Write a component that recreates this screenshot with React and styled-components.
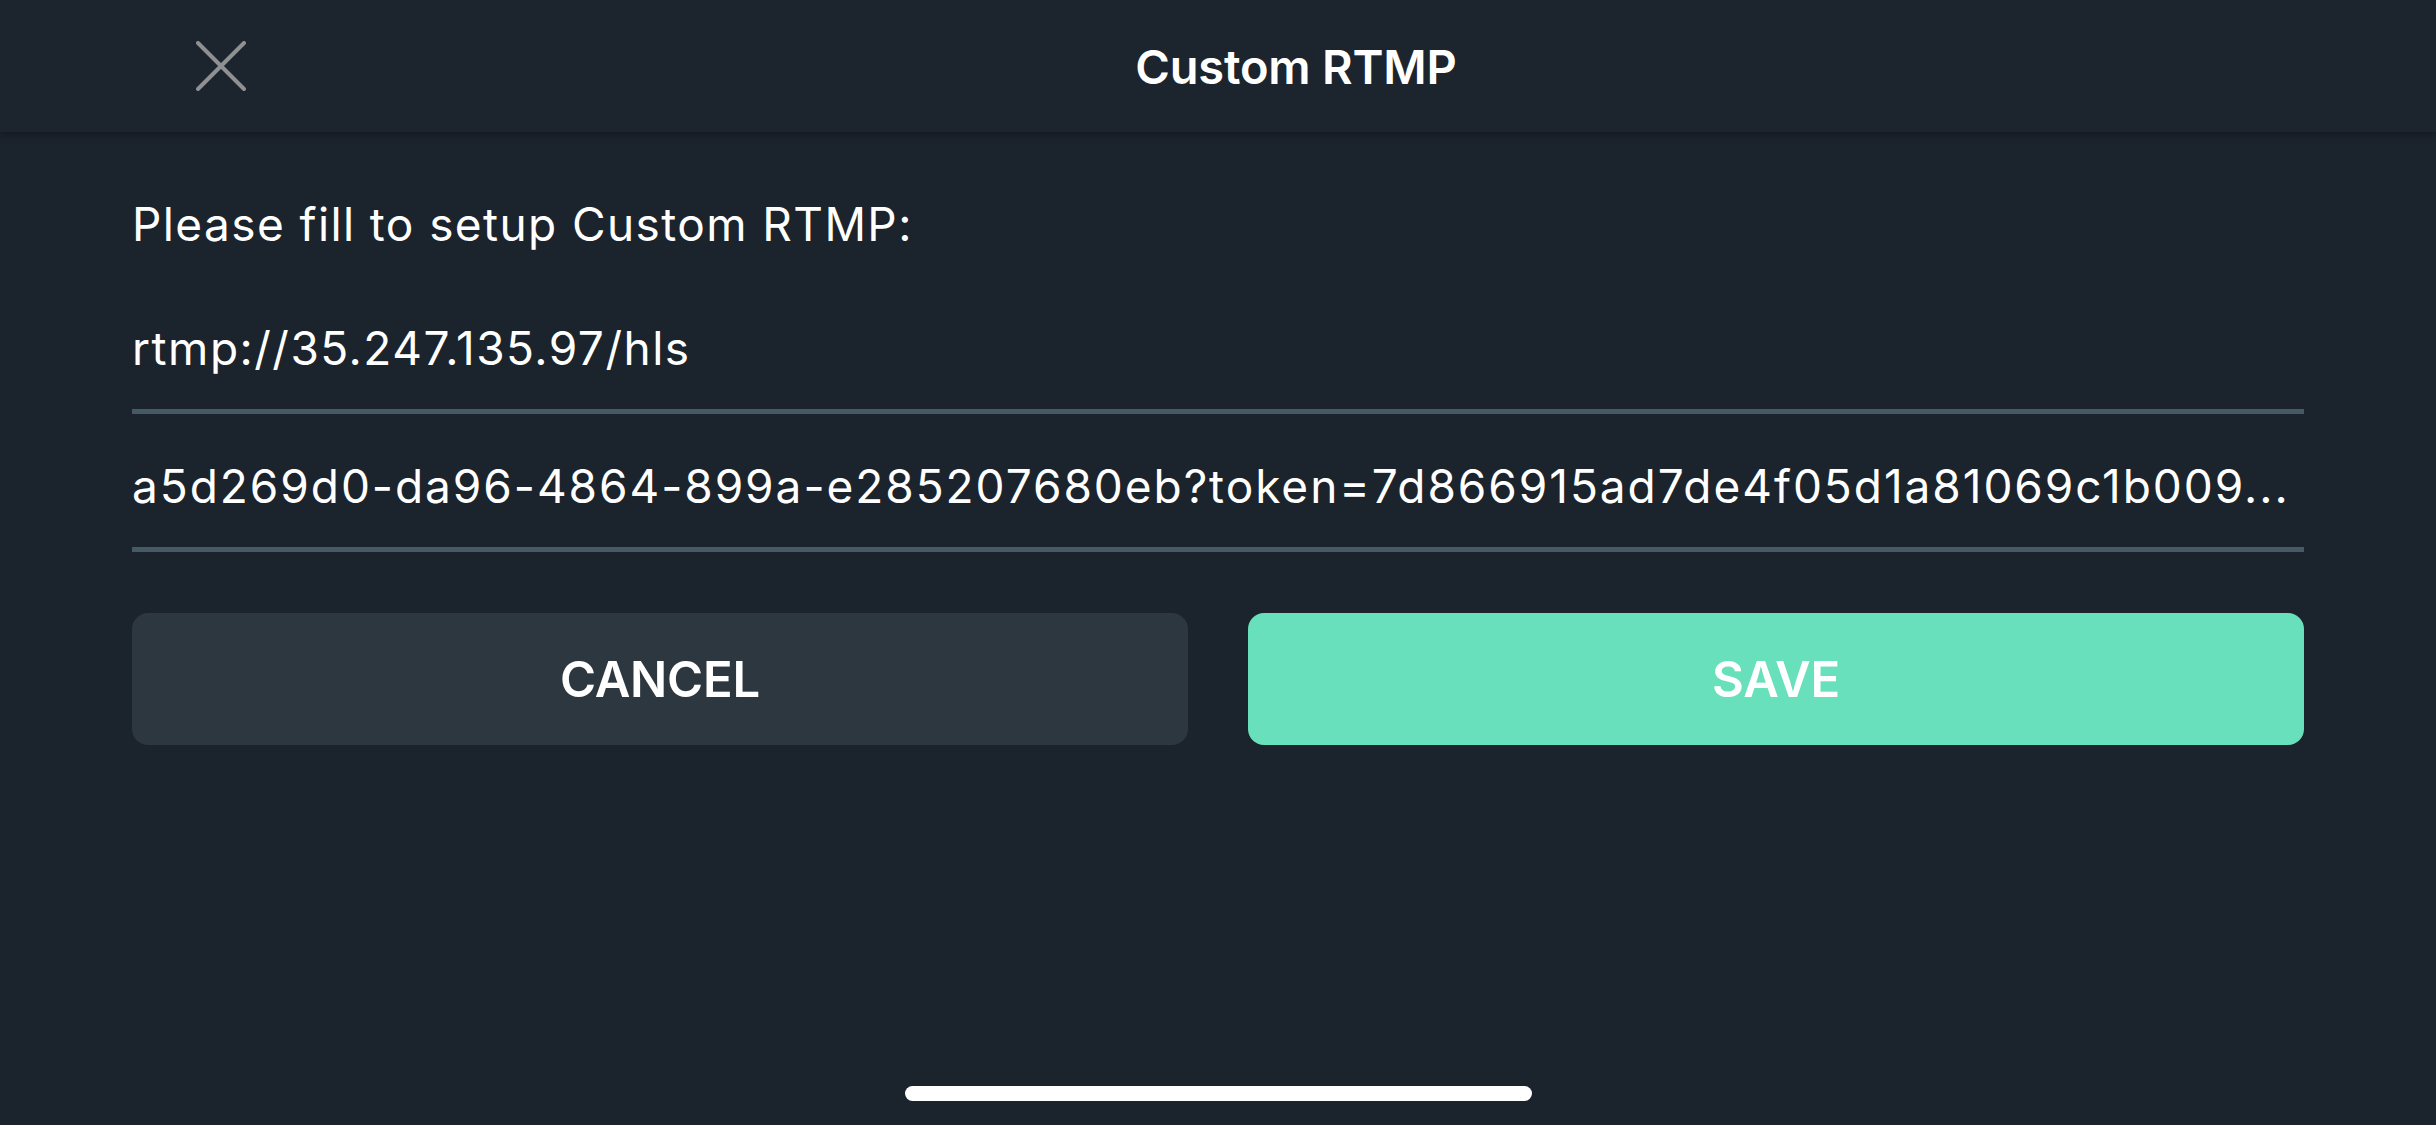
import React from 'react'
import styled, { createGlobalStyle } from 'styled-components'

const GlobalStyle = createGlobalStyle`
  html, body {
    margin: 0;
    padding: 0;
    background: #1b232c;
  }
  body {
    font-family: Inter, "Noto Sans", sans-serif;
    color: #fff;
    -webkit-font-smoothing: antialiased;
  }
`

const Screen = styled.div`
  width: 2436px;
  height: 1125px;
  background: #1b232c;
  display: flex;
  flex-direction: column;
  position: relative;
  overflow: hidden;
`

const Header = styled.header`
  height: 132px;
  flex-shrink: 0;
  background: #1c242d;
  box-shadow: 0 2px 8px rgba(0, 0, 0, 0.35);
  display: flex;
  align-items: center;
  justify-content: center;
  padding-left: 156px;
  position: relative;
  z-index: 1;
`

const CloseButton = styled.button`
  position: absolute;
  left: 196px;
  top: 41px;
  width: 50px;
  height: 50px;
  padding: 0;
  border: none;
  background: none;
  display: flex;
  align-items: center;
  justify-content: center;
  cursor: pointer;
`

const Title = styled.h1`
  margin: 0;
  font-size: 47px;
  font-weight: 600;
  letter-spacing: -0.2px;
  color: #fff;
`

const Body = styled.main`
  flex: 1;
  padding: 66px 132px 0;
  display: flex;
  flex-direction: column;
`

const Prompt = styled.p`
  margin: 0;
  font-size: 46px;
  line-height: 53px;
  letter-spacing: 1.4px;
  color: #fff;
`

const Field = styled.div`
  padding: 46px 0 34px;
  border-bottom: 5px solid #465a66;
  font-size: 46px;
  line-height: 53px;
  letter-spacing: ${p => p.$spacing || '1.5px'};
  color: #fff;
  white-space: nowrap;
  overflow: hidden;
  text-overflow: ellipsis;
  margin-top: ${p => p.$first ? '25px' : '0'};
`

const Actions = styled.div`
  margin-top: 61px;
  display: grid;
  grid-template-columns: 1fr 1fr;
  gap: 60px;
`

const ActionButton = styled.button`
  height: 132px;
  border: none;
  border-radius: 16px;
  background: ${p => p.$primary ? '#68e0bb' : '#2d373f'};
  color: #fff;
  font-family: Inter, "Noto Sans", sans-serif;
  font-size: 49px;
  font-weight: 600;
  letter-spacing: -0.2px;
  cursor: pointer;
`

const HomeIndicator = styled.div`
  position: absolute;
  left: 905px;
  bottom: 24px;
  width: 627px;
  height: 15px;
  border-radius: 8px;
  background: #fff;
`

const CloseIcon = () => (
  <svg width="50" height="50" viewBox="0 0 50 50">
    <path d="M2 2 L48 48 M48 2 L2 48" stroke="#8e9092" strokeWidth="4" strokeLinecap="round" fill="none" />
  </svg>
)

const App = () => (
  <Screen>
    <GlobalStyle />
    <Header>
      <CloseButton aria-label="Close">
        <CloseIcon />
      </CloseButton>
      <Title>Custom RTMP</Title>
    </Header>
    <Body>
      <Prompt>Please fill to setup Custom RTMP:</Prompt>
      <Field $first>rtmp://35.247.135.97/hls</Field>
      <Field $spacing="1.95px">a5d269d0-da96-4864-899a-e285207680eb?token=7d866915ad7de4f05d1a81069c1b009...</Field>
      <Actions>
        <ActionButton>CANCEL</ActionButton>
        <ActionButton $primary>SAVE</ActionButton>
      </Actions>
    </Body>
    <HomeIndicator />
  </Screen>
)

export default App
